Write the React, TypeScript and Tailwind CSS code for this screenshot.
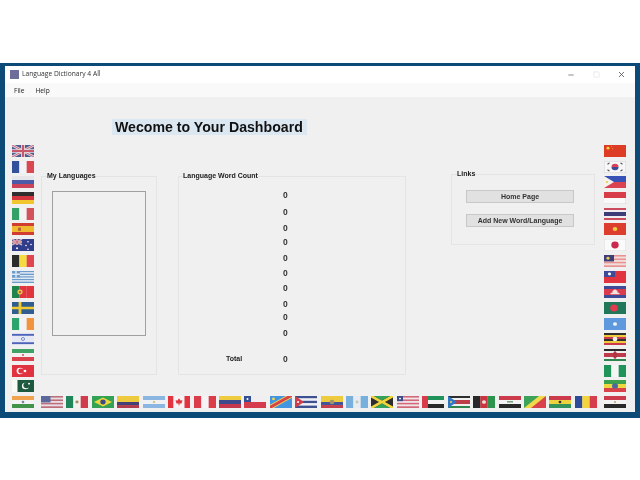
import React from 'react';
import { Minus, Square, X } from 'lucide-react';

const H = ({ c }: { c: string[] }) => (
  <>
    {c.map((f, i) => (
      <rect key={i} x={0} y={(i * 13) / c.length} width={22} height={13 / c.length + 0.1} fill={f} />
    ))}
  </>
);

const V = ({ c }: { c: string[] }) => (
  <>
    {c.map((f, i) => (
      <rect key={i} x={(i * 22) / c.length} y={0} width={22 / c.length + 0.1} height={13} fill={f} />
    ))}
  </>
);

const Union = ({ w = 22, h = 13 }: { w?: number; h?: number }) => (
  <>
    <rect width={w} height={h} fill="#3f4d88" />
    <path d={`M0 0L${w} ${h}M${w} 0L0 ${h}`} stroke="#e8e0e4" strokeWidth={h / 5} />
    <path d={`M0 0L${w} ${h}M${w} 0L0 ${h}`} stroke="#c4576c" strokeWidth={h / 12} />
    <path d={`M${w / 2} 0V${h}M0 ${h / 2}H${w}`} stroke="#e8e0e4" strokeWidth={h / 3.4} />
    <path d={`M${w / 2} 0V${h}M0 ${h / 2}H${w}`} stroke="#c4475c" strokeWidth={h / 6} />
  </>
);

const flags: Record<string, React.ReactNode> = {
  uk: <Union />,
  france: <V c={['#1f3f95', '#f4f4f6', '#d8353f']} />,
  russia: <H c={['#e4e4ea', '#3a4ba0', '#c8324a']} />,
  germany: <H c={['#1a1a1a', '#d0202a', '#f2c21a']} />,
  italy: <V c={['#1f9a55', '#f4f4f4', '#d0404a']} />,
  spain: (
    <>
      <H c={['#cf2a1e', '#f1b51c', '#f1b51c', '#cf2a1e']} />
      <rect x={6} y={5} width={3} height={3.5} fill="#b5541e" />
    </>
  ),
  australia: (
    <>
      <rect width={22} height={13} fill="#1c2a80" />
      <Union w={10} h={6.5} />
      <circle cx={5} cy={10} r={1} fill="#fff" />
      <circle cx={16} cy={3} r={0.8} fill="#fff" />
      <circle cx={19} cy={6} r={0.8} fill="#fff" />
      <circle cx={14} cy={7} r={0.8} fill="#fff" />
      <circle cx={16} cy={11} r={0.8} fill="#fff" />
    </>
  ),
  belgium: <V c={['#161616', '#f6d92c', '#e0343e']} />,
  greece: (
    <>
      <H c={['#5e93c8', '#dfe8f2', '#5e93c8', '#dfe8f2', '#5e93c8', '#dfe8f2', '#5e93c8', '#dfe8f2', '#5e93c8']} />
      <rect width={8} height={7} fill="#5e93c8" />
      <path d="M4 0V7M0 3.5H8" stroke="#dfe8f2" strokeWidth={1.4} />
    </>
  ),
  portugal: (
    <>
      <V c={['#0a7a3c', '#e0202a', '#e0202a']} />
      <circle cx={8} cy={6.5} r={2.6} fill="#e8c23a" />
      <circle cx={8} cy={6.5} r={1.2} fill="#c8382a" />
    </>
  ),
  sweden: (
    <>
      <rect width={22} height={13} fill="#1d4f84" />
      <path d="M8 0V13M0 6.5H22" stroke="#f2c81e" strokeWidth={2.8} />
    </>
  ),
  ireland: <V c={['#179c5e', '#f4f4f4', '#f28a2c']} />,
  israel: (
    <>
      <rect width={22} height={13} fill="#e6e8f4" />
      <rect y={1} width={22} height={2} fill="#3c55b5" />
      <rect y={10} width={22} height={2} fill="#3c55b5" />
      <circle cx={11} cy={6.5} r={1.6} fill="none" stroke="#5a78c8" strokeWidth={0.9} />
    </>
  ),
  iran: (
    <>
      <H c={['#2f9a58', '#f6f2f2', '#d8303c']} />
      <circle cx={11} cy={6.5} r={1} fill="#c84050" />
    </>
  ),
  turkey: (
    <>
      <rect width={22} height={13} fill="#e01e2c" />
      <circle cx={8} cy={6.5} r={3.4} fill="#fff" />
      <circle cx={9} cy={6.5} r={2.7} fill="#e01e2c" />
      <circle cx={13} cy={6.5} r={1.3} fill="#fff" />
    </>
  ),
  pakistan: (
    <>
      <rect width={22} height={13} fill="#06492a" />
      <rect width={5.5} height={13} fill="#fafaf6" />
      <circle cx={13.5} cy={6.5} r={3.6} fill="#fff" />
      <circle cx={14.6} cy={5.8} r={3.2} fill="#06492a" />
      <circle cx={17} cy={4} r={1} fill="#fff" />
    </>
  ),
  india: (
    <>
      <H c={['#f29a3e', '#f4f4f2', '#2f8a3a']} />
      <circle cx={11} cy={6.5} r={1.3} fill="#6a78a8" />
    </>
  ),
  us: (
    <>
      <H c={['#b8606e', '#e8dde2', '#b8606e', '#e8dde2', '#b8606e', '#e8dde2', '#b8606e']} />
      <rect width={9.5} height={7} fill="#4a5a92" />
    </>
  ),
  mexico: (
    <>
      <V c={['#0a7a4a', '#f2f2f0', '#cc2a3c']} />
      <circle cx={11} cy={6.5} r={1.6} fill="#a08050" />
    </>
  ),
  brazil: (
    <>
      <rect width={22} height={13} fill="#1f9a44" />
      <path d="M11 1.5L20 6.5L11 11.5L2 6.5Z" fill="#ecd52a" />
      <circle cx={11} cy={6.5} r={2.7} fill="#2a3a80" />
    </>
  ),
  colombia: (
    <>
      <rect width={22} height={6.5} fill="#eec62c" />
      <rect y={6.5} width={22} height={3.3} fill="#30306a" />
      <rect y={9.8} width={22} height={3.2} fill="#a82a3c" />
    </>
  ),
  argentina: (
    <>
      <H c={['#7fb0e0', '#f0f2f6', '#7fb0e0']} />
      <circle cx={11} cy={6.5} r={1.2} fill="#d8b858" />
    </>
  ),
  canada: (
    <>
      <V c={['#e0202c', '#f6f4f4', '#f6f4f4', '#e0202c']} />
      <path d="M11 2.5L12.5 5L14.5 4.5L13.5 8L11.5 8V10H10.5V8L8.5 8L7.5 4.5L9.5 5Z" fill="#e0202c" />
    </>
  ),
  peru: <V c={['#d82a38', '#f6f4f4', '#d82a38']} />,
  venezuela: <H c={['#eec72c', '#2a3a82', '#c0243c']} />,
  chile: (
    <>
      <rect width={22} height={6.5} fill="#f0eef0" />
      <rect y={6.5} width={22} height={6.5} fill="#d4283c" />
      <rect width={7} height={6.5} fill="#22408a" />
      <circle cx={3.5} cy={3.2} r={1} fill="#fff" />
    </>
  ),
  drc: (
    <>
      <rect width={22} height={13} fill="#2f8ce0" />
      <path d="M-1 13L22 -1" stroke="#f0d040" strokeWidth={5} />
      <path d="M-1 13L22 -1" stroke="#d83038" strokeWidth={3} />
      <circle cx={3.5} cy={3.2} r={1.5} fill="#f0d040" />
    </>
  ),
  cuba: (
    <>
      <H c={['#2a3f88', '#eeeef4', '#2a3f88', '#eeeef4', '#2a3f88']} />
      <path d="M0 0L9 6.5L0 13Z" fill="#cf2a3c" />
      <circle cx={3} cy={6.5} r={1} fill="#fff" />
    </>
  ),
  ecuador: (
    <>
      <rect width={22} height={6.5} fill="#eec62c" />
      <rect y={6.5} width={22} height={3.3} fill="#30468e" />
      <rect y={9.8} width={22} height={3.2} fill="#c02a3c" />
      <circle cx={11} cy={6.5} r={2.4} fill="#9a8a5a" />
    </>
  ),
  guatemala: (
    <>
      <V c={['#6aa8dc', '#e8ecf2', '#6aa8dc']} />
      <circle cx={11} cy={6.5} r={1.5} fill="#b8c8a8" />
    </>
  ),
  jamaica: (
    <>
      <rect width={22} height={13} fill="#1a1a1a" />
      <path d="M0 0H3L11 5L19 0H22V1.5L14 6.5L22 11.5V13H19L11 8L3 13H0V11.5L8 6.5L0 1.5Z" fill="#f0d02a" />
      <path d="M3 0H19L11 5Z M3 13H19L11 8Z" fill="#1f9a4a" />
    </>
  ),
  liberia: (
    <>
      <H c={['#cf5a6c', '#f0e4e8', '#cf5a6c', '#f0e4e8', '#cf5a6c', '#f0e4e8', '#cf5a6c']} />
      <rect width={6} height={5.6} fill="#2a3a80" />
      <circle cx={3} cy={2.8} r={1} fill="#fff" />
    </>
  ),
  uae: (
    <>
      <H c={['#0a8a4a', '#f4f4f4', '#141414']} />
      <rect width={6} height={13} fill="#d8283a" />
    </>
  ),
  ssudan: (
    <>
      <H c={['#1a1a1a', '#f0f0f0', '#b82a38', '#b82a38', '#f0f0f0', '#1a7a3c']} />
      <path d="M0 0L9 6.5L0 13Z" fill="#1e6ac0" />
      <circle cx={3} cy={6.5} r={1} fill="#f0d040" />
    </>
  ),
  afghanistan: (
    <>
      <V c={['#141414', '#c8202c', '#1a8a3c']} />
      <circle cx={11} cy={6.5} r={2} fill="#e8e0d8" />
    </>
  ),
  iraq: (
    <>
      <H c={['#c8283a', '#f6f4f4', '#141414']} />
      <rect x={8} y={5.6} width={6} height={1.4} fill="#4a8a5a" />
    </>
  ),
  congo: (
    <>
      <rect width={22} height={13} fill="#f0d838" />
      <path d="M0 0H15L0 13Z" fill="#2a9a4a" />
      <path d="M22 13H7L22 0Z" fill="#d8303a" />
    </>
  ),
  ghana: (
    <>
      <H c={['#c8283a', '#f0cf2a', '#1f8a4a']} />
      <circle cx={11} cy={6.5} r={1.4} fill="#1a1a1a" />
    </>
  ),
  romania: <V c={['#1a3a90', '#f4d22a', '#d42a3c']} />,
  egypt: (
    <>
      <H c={['#c8283a', '#f6f4f4', '#141414']} />
      <circle cx={11} cy={6.5} r={1} fill="#b89a50" />
    </>
  ),
  china: (
    <>
      <rect width={22} height={13} fill="#dc2a10" />
      <circle cx={4} cy={3.5} r={1.5} fill="#f4d22a" />
      <circle cx={7.5} cy={1.8} r={0.5} fill="#f4d22a" />
      <circle cx={8.5} cy={4} r={0.5} fill="#f4d22a" />
    </>
  ),
  korea: (
    <>
      <rect width={22} height={13} fill="#f8f8fa" stroke="#c0c0cc" strokeWidth={0.8} />
      <path d="M7.5 6.5A3.5 3.5 0 0 1 14.5 6.5Z" fill="#d83048" />
      <path d="M7.5 6.5A3.5 3.5 0 0 0 14.5 6.5Z" fill="#2a3a90" />
      <path d="M3.5 3.5L5.5 2M16.5 2L18.5 3.5M3.5 9.5L5.5 11M16.5 11L18.5 9.5" stroke="#444" strokeWidth={1.2} />
    </>
  ),
  philippines: (
    <>
      <H c={['#2440b0', '#d83040']} />
      <path d="M0 0L10 6.5L0 13Z" fill="#f6f4ec" />
      <circle cx={3} cy={6.5} r={1.2} fill="#e8c840" />
    </>
  ),
  indonesia: (
    <>
      <H c={['#d42a38', '#fafafa']} />
      <path d="M0 13H22V6.5" fill="none" stroke="#d0c8c8" strokeWidth={0.8} />
    </>
  ),
  thailand: <H c={['#c83a4c', '#f0eef2', '#2a2a6a', '#2a2a6a', '#f0eef2', '#c83a4c']} />,
  vietnam: (
    <>
      <rect width={22} height={13} fill="#dc2a18" />
      <circle cx={11} cy={6.5} r={2.3} fill="#f4c82a" />
    </>
  ),
  japan: (
    <>
      <rect width={22} height={13} fill="#fcfcfc" stroke="#d0d0d0" strokeWidth={0.8} />
      <circle cx={11} cy={6.5} r={3.7} fill="#c8143c" />
    </>
  ),
  malaysia: (
    <>
      <H c={['#e88a8a', '#f4dcd8', '#e88a8a', '#f4dcd8', '#e88a8a', '#f4dcd8', '#e88a8a']} />
      <rect width={10} height={7} fill="#2a2a6a" />
      <circle cx={4} cy={3.5} r={1.6} fill="#e8c840" />
    </>
  ),
  taiwan: (
    <>
      <rect width={22} height={13} fill="#e0202c" />
      <rect width={11} height={6.5} fill="#2a3a90" />
      <circle cx={5.5} cy={3.2} r={1.6} fill="#fff" />
    </>
  ),
  cambodia: (
    <>
      <H c={['#2a3a90', '#d8283c', '#d8283c', '#2a3a90']} />
      <path d="M6.5 9V7.5L8.5 7V5.5L11 3.5L13.5 5.5V7L15.5 7.5V9Z" fill="#f0e4e4" />
    </>
  ),
  bangladesh: (
    <>
      <rect width={22} height={13} fill="#0a6a4a" />
      <circle cx={10} cy={6.5} r={3.8} fill="#e0283c" />
    </>
  ),
  somalia: (
    <>
      <rect width={22} height={13} fill="#4f90dc" />
      <circle cx={11} cy={6.5} r={2} fill="#f0f6fc" />
    </>
  ),
  uganda: (
    <>
      <H c={['#1a1a1a', '#eec62c', '#c8283a', '#1a1a1a', '#eec62c', '#c8283a']} />
      <circle cx={11} cy={6.5} r={2.4} fill="#f0f0f0" />
    </>
  ),
  kenya: (
    <>
      <H c={['#141414', '#f0f0f0', '#b8283a', '#b8283a', '#f0f0f0', '#1a7a3c']} />
      <ellipse cx={11} cy={6.5} rx={1.8} ry={4} fill="#a82030" />
    </>
  ),
  nigeria: <V c={['#0a8a4a', '#f6f6f6', '#0a8a4a']} />,
  ethiopia: (
    <>
      <H c={['#2a9a3c', '#eed62c', '#d83038']} />
      <circle cx={11} cy={6.5} r={3} fill="#3a5a9a" />
    </>
  ),
};

const Flag = ({ name }: { name: string }) => (
  <svg viewBox="0 0 22 13" className="w-[22px] h-[12px] shrink-0 opacity-90" preserveAspectRatio="none">
    {flags[name]}
  </svg>
);

const leftFlags = ['uk', 'france', 'russia', 'germany', 'italy', 'spain', 'australia', 'belgium', 'greece', 'portugal', 'sweden', 'ireland', 'israel', 'iran', 'turkey', 'pakistan', 'india'];
const rightFlags = ['china', 'korea', 'philippines', 'indonesia', 'thailand', 'vietnam', 'japan', 'malaysia', 'taiwan', 'cambodia', 'bangladesh', 'somalia', 'uganda', 'kenya', 'nigeria', 'ethiopia', 'egypt'];
const bottomFlags = ['us', 'mexico', 'brazil', 'colombia', 'argentina', 'canada', 'peru', 'venezuela', 'chile', 'drc', 'cuba', 'ecuador', 'guatemala', 'jamaica', 'liberia', 'uae', 'ssudan', 'afghanistan', 'iraq', 'congo', 'ghana', 'romania'];

// row heights of the word count column, the gaps are uneven in the form
const countRows = ['h-[17px]', 'h-[16px]', 'h-[14px]', 'h-[16px]', 'h-[15px]', 'h-[15px]', 'h-[16px]', 'h-[13px]', 'h-[16px]', 'h-[26px]'];

const App: React.FC = () => {
  return (
    <div className="w-[640px] h-[480px] bg-white pt-[63px] font-['Liberation_Sans',sans-serif] text-[#1a1a1a] overflow-hidden">
      <div className="h-[355px] bg-[#0c4a78] pl-[5px] pr-[5px] pt-[3px] pb-[6px]">
        <div className="h-full bg-[#f0f0f0] flex flex-col blur-[0.35px]">
          {/* Title bar */}
          <div className="h-[17px] bg-white flex items-center pl-[5px] pr-[9px] shrink-0">
            <div className="w-[9px] h-[9px] bg-[#6d6d9a] mr-[3px]" />
            <span className="text-[6.7px] font-['Open_Sans',sans-serif] text-[#333] flex-1">Language Dictionary 4 All</span>
            <Minus className="w-[8px] h-[8px] text-[#555]" strokeWidth={2} />
            <Square className="w-[7px] h-[7px] text-[#ddd] ml-[18px]" strokeWidth={2} />
            <X className="w-[9px] h-[9px] text-[#444] ml-[17px]" strokeWidth={2} />
          </div>

          {/* Menu */}
          <div className="h-[14px] bg-[#f9f9f9] flex items-center gap-[11px] pl-[9px] pt-[1px] shrink-0 text-[6.6px] font-['Open_Sans',sans-serif] text-[#222]">
            <span>File</span>
            <span>Help</span>
          </div>

          <div className="flex flex-1 pl-[7px] pr-[8px]">
            <div className="w-[22px] h-[263px] mt-[48px] flex flex-col justify-between">
              {leftFlags.map((f) => (
                <Flag key={f} name={f} />
              ))}
            </div>

            <div className="w-[570px] flex flex-col px-[7px]">
              <h1 className="self-start mt-[22px] ml-[71px] px-[3px] pr-[4px] h-[16px] leading-[16px] bg-[#dbe8f2] text-[14.15px] font-bold whitespace-nowrap text-[#111]">
                Wecome to Your Dashboard
              </h1>

              <div className="flex mt-[36px]">
                <fieldset className="w-[116px] h-[204px] border border-[#e4e4e4] pl-[10px]">
                  <legend className="-ml-[5px] text-[7px] font-bold leading-[10px]">My Languages</legend>
                  <div className="w-[94px] h-[145px] mt-[10px] border border-[#a0a0a0]" />
                </fieldset>

                <fieldset className="w-[228px] h-[204px] ml-[21px] border border-[#e4e4e4] text-[8.5px] font-bold">
                  <legend className="ml-[4px] text-[7px] leading-[10px]">Language Word Count</legend>
                  <div className="pl-[104px] pt-[7px] leading-[14px] text-[#333]">
                    {countRows.map((h, i) => (
                      <div key={i} className={h}>
                        0
                      </div>
                    ))}
                    <div className="flex -ml-[57px]">
                      <span className="w-[57px] text-[#222] text-[7px]">Total</span>
                      <span>0</span>
                    </div>
                  </div>
                </fieldset>

                <fieldset className="w-[144px] h-[76px] ml-[45px] -mt-[2px] border border-[#e4e4e4] pl-[14px] pr-[20px]">
                  <legend className="-ml-[9px] text-[7px] font-bold leading-[10px]">Links</legend>
                  <div className="flex flex-col gap-[11px] mt-[11px]">
                    <button className="h-[13px] bg-[#e1e1e1] border border-[#c8c8c8] text-[7px] font-bold leading-none text-[#333]">Home Page</button>
                    <button className="h-[13px] bg-[#e1e1e1] border border-[#c8c8c8] text-[7px] font-bold leading-none text-[#333]">Add New Word/Language</button>
                  </div>
                </fieldset>
              </div>

              <div className="flex justify-between mt-[21px]">
                {bottomFlags.map((f) => (
                  <Flag key={f} name={f} />
                ))}
              </div>
            </div>

            <div className="w-[22px] h-[263px] mt-[48px] flex flex-col justify-between">
              {rightFlags.map((f) => (
                <Flag key={f} name={f} />
              ))}
            </div>
          </div>
        </div>
      </div>
    </div>
  );
};

export default App;
